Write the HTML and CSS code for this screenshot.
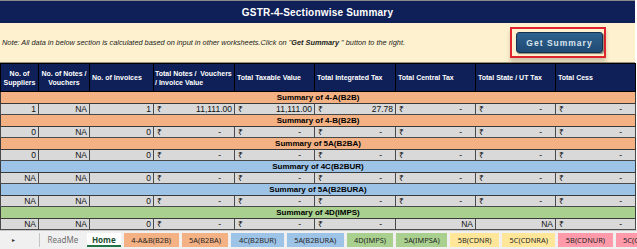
FILE: index.html
```html
<!DOCTYPE html>
<html lang="en">
<head>
    <meta charset="UTF-8">
    <title>GSTR-4 Sectionwise Summary</title>
    <link rel="stylesheet" href="styles.css">
</head>
<body>

<div class="sheet">
    <div class="title">GSTR-4-Sectionwise Summary</div>

    <div class="note">
        <p>Note: All data in below section is calculated based on input in other worksheets.Click on "<b>Get Summary</b> " button to the right.</p>
        <div class="btn-frame">
            <button class="btn">Get Summary</button>
        </div>
    </div>

    <table class="grid">
        <colgroup>
            <col style="width:38px">
            <col style="width:51px">
            <col style="width:64px">
            <col style="width:81px">
            <col style="width:80px">
            <col style="width:81px">
            <col style="width:80px">
            <col style="width:80px">
            <col style="width:80px">
        </colgroup>
        <thead>
            <tr>
                <th class="center">No. of Suppliers</th>
                <th class="center">No. of Notes / Vouchers</th>
                <th>No. of Invoices</th>
                <th class="tight">Total Notes / &nbsp;Vouchers<br>/ Invoice Value</th>
                <th>Total Taxable Value</th>
                <th>Total Integrated Tax</th>
                <th>Total Central Tax</th>
                <th>Total State / UT Tax</th>
                <th>Total Cess</th>
            </tr>
        </thead>
        <tbody id="gridBody"></tbody>
    </table>

    <div class="tabs">
        <span class="tab-arrow">&#9656;</span>
        <span class="tab plain">ReadMe</span>
        <span class="tab active">Home</span>
        <span class="tab salmon">4-A&amp;B(B2B)</span>
        <span class="tab salmon">5A(B2BA)</span>
        <span class="tab blue">4C(B2BUR)</span>
        <span class="tab blue">5A(B2BURA)</span>
        <span class="tab green">4D(IMPS)</span>
        <span class="tab green">5A(IMPSA)</span>
        <span class="tab yellow">5B(CDNR)</span>
        <span class="tab yellow">5C(CDNRA)</span>
        <span class="tab pink">5B(CDNUR)</span>
        <span class="tab pink">5C(CDNURA)</span>
    </div>
</div>

<script>
    // each section: title, colour, then the row values
    // numbers are plain cells, "₹x" are accounting cells, "NA" stays plain
    const sections = [
        { name: '4-A(B2B)', tone: 'salmon', row: ['1', 'NA', '1', '₹11,111.00', '₹11,111.00', '₹27.78', '₹-', '₹-', '₹-'] },
        { name: '4-B(B2B)', tone: 'salmon', row: ['0', 'NA', '0', '₹-', '₹-', '₹-', '₹-', '₹-', '₹-'] },
        { name: '5A(B2BA)', tone: 'salmon', row: ['0', 'NA', '0', '₹-', '₹-', '₹-', '₹-', '₹-', '₹-'] },
        { name: '4C(B2BUR)', tone: 'blue', row: ['NA', 'NA', '0', '₹-', '₹-', '₹-', '₹-', '₹-', '₹-'] },
        { name: '5A(B2BURA)', tone: 'blue', row: ['NA', 'NA', '0', '₹-', '₹-', '₹-', '₹-', '₹-', '₹-'] },
        { name: '4D(IMPS)', tone: 'green', row: ['NA', 'NA', '0', '₹-', '₹-', '₹-', 'NA', 'NA', '₹-'] }
    ];

    function buildGrid() {
        const body = document.getElementById('gridBody');

        sections.forEach(section => {
            const head = document.createElement('tr');
            head.className = 'section ' + section.tone;
            const headCell = document.createElement('td');
            headCell.colSpan = 9;
            headCell.innerText = 'Summary of ' + section.name;
            head.appendChild(headCell);
            body.appendChild(head);

            const row = document.createElement('tr');
            row.className = 'data';
            section.row.forEach(value => {
                const cell = document.createElement('td');
                if (value.startsWith('₹')) {
                    const amount = value.slice(1);
                    cell.className = 'amt';
                    cell.innerHTML = '<span class="cur">₹</span>' +
                        (amount === '-' ? '<span class="dash">-</span>' : amount);
                } else {
                    cell.innerText = value;
                }
                row.appendChild(cell);
            });
            body.appendChild(row);
        });
    }

    buildGrid();
</script>

</body>
</html>
```

FILE: styles.css
```css
/* sheet frame */
body {
    margin: 0;
    padding: 0;
    background: #ffffff;
    font-family: 'Liberation Sans', Arial, sans-serif;
    color: #000000;
}

.sheet {
    width: 637px;
    height: 249px;
    overflow: hidden;
    display: flex;
    flex-direction: column;
}

.title {
    width: 635px;
    height: 22px;
    border-top: 1px solid #8a8a8a;
    background: #0f2058;
    color: #ffffff;
    font-weight: bold;
    font-size: 10px;
    letter-spacing: 0.2px;
    display: flex;
    align-items: center;
    justify-content: center;
}

.note {
    width: 635px;
    height: 40px;
    box-sizing: border-box;
    background: #fdf1cf;
    border-bottom: 1px solid #9a9278;
    display: flex;
    align-items: center;
    justify-content: space-between;
}

.note p {
    margin: 0 0 0 2px;
    font-size: 7.35px;
    font-style: italic;
    color: #222222;
}

/* button with the red selection box round it */
.btn-frame {
    width: 96px;
    height: 31px;
    margin-right: 29px;
    border: 2px solid #e0242e;
    box-shadow: 0 4px 4px rgba(0, 0, 0, 0.18);
    padding: 3px 0 0 4px;
    box-sizing: border-box;
}

.btn {
    display: block;
    width: 87px;
    height: 21px;
    padding: 0;
    border: 1px solid #152f4e;
    border-radius: 3px;
    background: linear-gradient(#2f6290, #1f4a73);
    box-shadow: 1px 1px 1px rgba(0, 0, 0, 0.45);
    color: #dbe4ec;
    font-family: 'Liberation Sans', Arial, sans-serif;
    font-weight: bold;
    font-size: 8.5px;
    letter-spacing: 1px;
}

/* grid */
.grid {
    width: 635px;
    table-layout: fixed;
    border-collapse: collapse;
}

.grid th {
    height: 27px;
    padding: 0 2px;
    background: #0f2058;
    border: 1px solid #000000;
    color: #ffffff;
    font-size: 7px;
    line-height: 9px;
    font-weight: bold;
    text-align: left;
}

.grid th.center {
    text-align: center;
}

.grid th.tight {
    padding: 0 1px;
    white-space: nowrap;
}

.grid td {
    padding: 0 2px;
    white-space: nowrap;
    overflow: hidden;
}

.section td {
    height: 11px;
    border: 1px solid #3a3a3a;
    font-size: 8px;
    line-height: 10px;
    font-weight: bold;
    text-align: center;
}

.section.salmon td { background: #f4b183; }
.section.blue td { background: #9dc3e6; }
.section.green td { background: #a9d08e; }

.data td {
    height: 10px;
    background: #d9d9d9;
    border: 1px solid #4a4a4a;
    font-size: 8.5px;
    line-height: 10px;
    text-align: right;
    color: #111111;
}

.data td.amt {
    padding-left: 3px;
}

.cur {
    float: left;
}

.dash {
    margin-right: 11px;
}

/* excel style sheet tabs */
.tabs {
    flex: 1;
    background: #f0f0f0;
    border-top: 1px solid #c8c8c8;
    display: flex;
    align-items: flex-start;
    padding-top: 2px;
    white-space: nowrap;
    overflow: hidden;
    font-family: 'Noto Sans', sans-serif;
    font-size: 7.4px;
}

.tab-arrow {
    flex-shrink: 0;
    width: 40px;
    height: 14px;
    padding-left: 12px;
    box-sizing: border-box;
    border-right: 1px solid #c4c4c4;
    font-size: 6px;
    line-height: 14px;
    color: #333333;
}

.tab {
    flex-shrink: 0;
    height: 14px;
    line-height: 14px;
    padding: 0 7.5px;
    margin-right: 3px;
    color: #262626;
}

.tab.plain {
    width: 44px;
    box-sizing: border-box;
    text-align: center;
    color: #6e6e6e;
    font-size: 8px;
}

.tab.active {
    background: #ffffff;
    border-bottom: 2px solid #217346;
    height: 12px;
    padding: 0 5px;
    font-weight: bold;
    font-size: 8px;
    color: #1b4d2e;
}

.tab.salmon { background: #f4b183; }
.tab.blue { background: #9dc3e6; }
.tab.green { background: #a9d08e; }
.tab.yellow { background: #ffe699; }
.tab.pink { background: #ff9aaa; }
```
